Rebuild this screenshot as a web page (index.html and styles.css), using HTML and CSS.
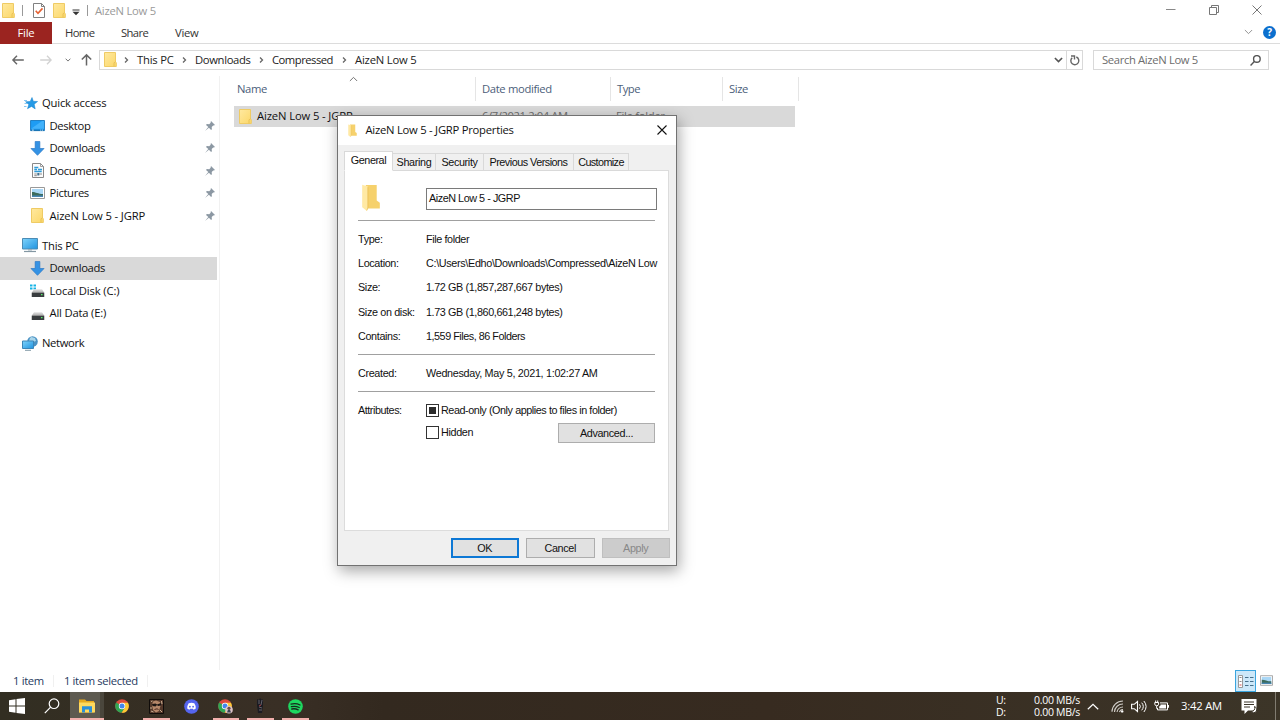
FILE: index.html
```html
<!DOCTYPE html>
<html lang="en">
<head>
<meta charset="utf-8">
<title>AizeN Low 5</title>
<link rel="stylesheet" href="styles.css">
</head>
<body>
<svg class="defs" width="0" height="0">
  <defs>
    <linearGradient id="gf" x1="0" y1="0" x2="1" y2="1"><stop offset="0" stop-color="#ffe9a0"/><stop offset="1" stop-color="#fbd768"/></linearGradient>
    <linearGradient id="gb" x1="0" y1="0" x2="1" y2="1"><stop offset="0" stop-color="#7fd3fb"/><stop offset="1" stop-color="#1f93df"/></linearGradient>
    <linearGradient id="gd" x1="0" y1="0" x2="0" y2="1"><stop offset="0" stop-color="#e2e2e2"/><stop offset="1" stop-color="#a5a5a5"/></linearGradient>
  </defs>
  <symbol id="folder" viewBox="0 0 13 15"><path d="M.5.500h11v9.500l.8.800v3.700H.5z" fill="url(#gf)" stroke="#efcb64"/><path d="M10 14.300v-3.500l1.500-1" fill="none" stroke="#e6bd50" stroke-width=".8"/></symbol>
  <symbol id="openfolder" viewBox="0 0 18 26"><path d="M4 1h10.500v15l3 2v5.500H4z" fill="#f6d16c"/><path d="M.5.8 6 2.500v20L5 26 .5 22.500z" fill="#ffe9a4"/><path d="M6 3v20l-1 2.500" fill="none" stroke="#e8bd50" stroke-width=".7"/></symbol>
  <symbol id="star" viewBox="0 0 14 13"><path d="m8 .5 1.300 3.800 4.300.2-3.400 2.700 1 4.700-3.700-2.500-4 2.300 1.300-4.200L1.500 4.700l4.700-.2z" fill="#259ae6" stroke="#1683cc" stroke-width=".5"/><path d="M0 3.500h3M.5 6.500h2.700M0 9.500h2.500" stroke="#67baf0" stroke-width=".8"/></symbol>
  <symbol id="desktop" viewBox="0 0 16 13"><path d="M.5.5h15v11H.5z" fill="#1d9cf4" stroke="#1676bd"/><path d="M1 9.500 13 1h2v8.500z" fill="#42b2fb"/><path d="M1 11h14" stroke="#146aa9"/><path d="M2 11h2M11 11h1M13 11h1" stroke="#d7efff"/></symbol>
  <symbol id="down" viewBox="0 0 15 16"><path d="M5 .5h5v7.500h4.500L7.500 15.300.5 8H5z" fill="#3492e4" stroke="#2676c4" stroke-width=".7"/></symbol>
  <symbol id="doc" viewBox="0 0 12 15"><path d="M.5.500h8l3 3v11h-11z" fill="#fcfcfc" stroke="#888"/><path d="M8.500.5v3h3" fill="none" stroke="#888" stroke-width=".8"/><path d="M2.300 4.500h4M6 6.500h4M2.300 6.500H5M2.300 8.500h7.400" stroke="#2f9bd8" stroke-width="1.400"/><path d="M2.300 11h2.500M7.300 11H10M2.300 12.700h2.500" stroke="#8a8a8a"/><path d="M5.300 10h2v2.500h-2z" fill="#466f8b"/></symbol>
  <symbol id="pic" viewBox="0 0 15 12"><path d="M.5.500h14v11H.5z" fill="#fff" stroke="#999"/><path d="M2 2h11v8H2z" fill="#a9d7f6"/><path d="M2 5c4 0 6 2 11 2v3H2z" fill="#3c6b5d"/><path d="M2 8.500h11V10H2z" fill="#4786b5"/></symbol>
  <symbol id="pc" viewBox="0 0 16 15"><path d="M.5.500h15v10.500H.5z" fill="url(#gb)" stroke="#4b8cb5"/><path d="M6 11h4v1.500H6z" fill="#9fb0ba"/><path d="M2 13.500h12" stroke="#8397a3" stroke-width="1.200"/></symbol>
  <symbol id="drive" viewBox="0 0 13 8"><path d="M2.500.3h8L13 4H0z" fill="url(#gd)"/><path d="M0 3.700h13V8H0z" fill="#393d3f"/><path d="M9.500 5.700H11" stroke="#55ee67" stroke-width="1.300"/></symbol>
  <symbol id="win" viewBox="0 0 16 16"><path d="M0 2.200 6.500 1.300V7.500H0zM7.500 1.100 16 0V7.500H7.500zM0 8.500h6.500v6.200L0 13.800zM7.500 8.500H16V16l-8.500-1.100z" fill="#fff"/></symbol>
  <symbol id="net" viewBox="0 0 16 15"><circle cx="10.500" cy="5.500" r="5.300" fill="#4a92c4"/><path d="M8 2c2-2 3 0 5 0l1 3-3 1-1 3-3-4z" fill="#a9d5ea"/><path d="M.5 5h11v7.500H.5z" fill="url(#gb)" stroke="#3c86b8"/><path d="M3 14.300h6" stroke="#829aa7"/></symbol>
  <symbol id="pin" viewBox="0 0 10 10"><path d="M6 0 10 4l-1.200.5-.6-.1-1.500 1.500.2 2.400-.8.6-2.200-2.200L0 10l3.300-3.900L1 3.900l.8-.8 2.400.2 1.500-1.500-.1-.6z" fill="#8c98a3"/></symbol>
  <symbol id="chev" viewBox="0 0 5 8"><path d="m1 1.500 2.500 2.500L1 6.500" fill="none" stroke="#666" stroke-width="1.300"/></symbol>
  <symbol id="chevd" viewBox="0 0 10 6"><path d="m1 .8 4 4 4-4" fill="none" stroke="currentColor" stroke-width="var(--w,1.500)"/></symbol>
  <symbol id="mag" viewBox="0 0 16 16"><circle cx="10" cy="5.700" r="4.800" fill="none" stroke="currentColor" stroke-width="var(--w,1.300)"/><path d="M6.600 9.200.8 15.200" stroke="currentColor" stroke-width="var(--w,1.300)"/></symbol>
  <symbol id="chrome" viewBox="0 0 14 14"><circle cx="7" cy="7" r="6.800" fill="#dd4b3e"/><path d="M7 7 1.100 3.600A6.800 6.800 0 0 0 6.700 13.800L10 8.700z" fill="#2fa653"/><path d="M7 3.800h6A6.800 6.800 0 0 1 6.700 13.800L10 8.600z" fill="#fcca35"/><circle cx="7" cy="7" r="3.200" fill="#fff"/><circle cx="7" cy="7" r="2.500" fill="#4287ee"/></symbol>
</svg>

<header class="titlebar">
  <svg class="tb-folder" width="13" height="15"><use href="#folder"/></svg>
  <i class="tb-sep tb-sep-a"></i>
  <svg class="tb-check" width="12" height="15" viewBox="0 0 12 15"><path d="M.5.500h8l3 3v11h-11z" fill="#fff" stroke="#818181"/><path d="M8.500.5v3h3" fill="none" stroke="#818181"/><path d="m2.700 7.800 2.300 2.600 4.500-5" fill="none" stroke="#e66233" stroke-width="1.600"/></svg>
  <svg class="tb-folder2" width="13" height="15"><use href="#folder"/></svg>
  <svg class="tb-drop" width="8" height="7" viewBox="0 0 8 7"><path d="M.5 1h7" stroke="#333"/><path d="M.5 2.800h7L4 6.300z" fill="#333"/></svg>
  <i class="tb-sep"></i>
  <span class="win-title">AizeN Low 5</span>
  <div class="win-ctl">
    <svg width="10" height="11" viewBox="0 0 10 11"><path d="M0 5.500h9.500" stroke="#888"/></svg>
    <svg width="10" height="10" viewBox="0 0 10 10"><path d="M.5 2.500h7v7h-7zM2.500 2.500v-2h7v7h-2" fill="none" stroke="#777"/></svg>
    <svg width="10" height="10" viewBox="0 0 10 10"><path d="m.5.500 9 9m0-9-9 9" stroke="#777"/></svg>
  </div>
</header>

<nav class="ribbon">
  <span class="tab-file">File</span><span class="rt rt-home">Home</span><span class="rt rt-share">Share</span><span class="rt rt-view">View</span>
  <div class="ribbon-end">
    <svg class="thin" width="9" height="6"><use href="#chevd"/></svg>
    <span class="help">?</span>
  </div>
</nav>

<section class="address">
  <svg class="a-back" width="12" height="10" viewBox="0 0 12 10"><path d="M5 .8.900 5 5 9.200M1 5h10.800" fill="none" stroke="#666" stroke-width="1.400"/></svg>
  <svg class="a-fwd" width="12" height="10" viewBox="0 0 12 10"><path d="M7 .8 11.100 5 7 9.200M11 5H.2" fill="none" stroke="#d2d2d2" stroke-width="1.300"/></svg>
  <svg class="a-rec" width="6" height="4"><use href="#chevd"/></svg>
  <svg class="a-up" width="11" height="12" viewBox="0 0 11 12"><path d="M.8 5.500 5.500.900l4.700 4.600M5.500 1v10.500" fill="none" stroke="#666" stroke-width="1.500"/></svg>
  <div class="crumbs">
    <svg width="13" height="15"><use href="#folder"/></svg>
    <svg class="c1" width="5" height="8"><use href="#chev"/></svg><span class="b1">This PC</span>
    <svg class="cx" width="5" height="8"><use href="#chev"/></svg><span class="b2">Downloads</span>
    <svg class="cx" width="5" height="8"><use href="#chev"/></svg><span class="b3">Compressed</span>
    <svg class="cx" width="5" height="8"><use href="#chev"/></svg><span class="b4">AizeN Low 5</span>
    <svg class="c-drop" width="9" height="6"><use href="#chevd"/></svg>
    <div class="refresh"><svg width="10" height="11" viewBox="0 0 10 11"><path d="M6.300 2A4 4 0 1 1 2.200 2.700M1 1h3.500v3.500" fill="none" stroke="#666" stroke-width="1.400"/></svg></div>
  </div>
  <div class="search"><span>Search AizeN Low 5</span><svg width="11" height="11"><use href="#mag"/></svg></div>
</section>

<main class="main">
  <aside class="side">
    <div class="row root"><svg class="ic-star" width="14" height="13"><use href="#star"/></svg><span>Quick access</span></div>
    <div class="row"><b class="ic"><svg width="15" height="12"><use href="#desktop"/></svg></b><span class="tight">Desktop</span><svg class="pin" width="10" height="10"><use href="#pin"/></svg></div>
    <div class="row"><b class="ic"><svg width="15" height="15"><use href="#down"/></svg></b><span class="tight">Downloads</span><svg class="pin" width="10" height="10"><use href="#pin"/></svg></div>
    <div class="row"><b class="ic"><svg width="12" height="15"><use href="#doc"/></svg></b><span class="tight">Documents</span><svg class="pin" width="10" height="10"><use href="#pin"/></svg></div>
    <div class="row"><b class="ic"><svg width="15" height="12"><use href="#pic"/></svg></b><span class="tight">Pictures</span><svg class="pin" width="10" height="10"><use href="#pin"/></svg></div>
    <div class="row"><b class="ic"><svg width="13" height="15"><use href="#folder"/></svg></b><span class="loose">AizeN Low 5 - JGRP</span><svg class="pin" width="10" height="10"><use href="#pin"/></svg></div>
    <div class="row root gap"><svg class="ic-pc" width="16" height="15"><use href="#pc"/></svg><span>This PC</span></div>
    <div class="row sel"><b class="ic"><svg width="15" height="15"><use href="#down"/></svg></b><span class="tight">Downloads</span></div>
    <div class="row"><b class="ic"><svg width="15" height="15" viewBox="0 0 15 15"><path d="M0 1.500h2.500v2H0zM3.500 1.500H6v2H3.500zM0 4.500h2.500v2H0zM3.500 4.500H6v2H3.500z" fill="#15b3e6"/><use href="#drive" x="1.500" y="6" width="13" height="8"/></svg></b><span class="loose">Local Disk (C:)</span></div>
    <div class="row"><b class="ic"><svg width="15" height="15" viewBox="0 0 15 15"><use href="#drive" x="1.500" y="6" width="13" height="8"/></svg></b><span>All Data (E:)</span></div>
    <div class="row root gap"><svg class="ic-pc" width="16" height="15"><use href="#net"/></svg><span class="tight">Network</span></div>
  </aside>
  <section class="files">
    <div class="thead">
      <span class="th th-name">Name<svg class="sort" width="9" height="6"><use href="#chevd"/></svg></span><span class="th th-date">Date modified</span><span class="th th-type">Type</span><span class="th th-size">Size</span>
    </div>
    <div class="file"><svg width="13" height="15"><use href="#folder"/></svg><span class="f-name loose">AizeN Low 5 - JGRP</span><span class="f-date">6/7/2021 2:04 AM</span><span class="f-type">File folder</span></div>
  </section>
</main>

<footer class="status">
  <span class="s1">1 item</span><span class="s2">1 item selected</span>
  <div class="views">
    <b class="v-on"><svg width="16" height="13" viewBox="0 0 16 13"><path d="M.5.500h4v12h-4z" fill="#fff" stroke="#999"/><path d="M1.500 2.500h2M1.500 6.500h2" stroke="#888"/><path d="M1.500 10h2" stroke="#d77" stroke-width="1.300"/><path d="M7 2.500h3.500M12 2.500h3.500M7 6.500h3.500M12 6.500h3.500M7 10.500h3.500M12 10.500h3.500" stroke="#47708b"/></svg></b>
    <svg class="v-pic" width="13" height="11"><use href="#pic"/></svg>
  </div>
</footer>

<footer class="taskbar">
  <b class="task"><svg width="16" height="16"><use href="#win"/></svg></b>
  <b class="task"><svg class="ts" width="16" height="16"><use href="#mag"/></svg></b>
  <b class="task active"><svg width="16" height="14" viewBox="0 0 16 14"><path d="M0 .5h6L7.500 2H15v11.500H0z" fill="#e8a91d"/><path d="M0 3.500h16v10H0z" fill="#ffd95e"/><path d="M3 13.500V7.300h10v6.200h-3V10.500H6v3z" fill="#2b8fd9"/></svg></b>
  <b class="task"><svg width="14" height="14"><use href="#chrome"/></svg></b>
  <b class="task run"><svg width="15" height="15" viewBox="0 0 15 15"><path d="M.5.500h14v14H.5z" fill="#54382a" stroke="#100c0a"/><path d="M4 2.500 7 1.500l4 1.500.5 4-1.500 5-3 1.500L4 11 3 6z" fill="#b58669"/><path d="M3 5l3.500-.5L8 5.500 12 4v2.500l-3 .5-1-1-1.500 1.500L3.500 7z" fill="#1d1514"/><path d="M5.500 10.500 8 9.800l1.500.7" fill="none" stroke="#4b2a22"/><path d="m2 12 2.500 1M11 11l2 2M2 2.500 3.500 2M12.500 2l.5 3M2 8v2" stroke="#cbb094"/></svg></b>
  <b class="task"><svg width="15" height="15" viewBox="0 0 15 15"><circle cx="7.500" cy="7.500" r="7.300" fill="#5565ee"/><path d="M4.700 4.300q2.800-1 5.600 0 1.700 2.500 1.500 5.300-1.300 1-2.300 1.100l-.6-.9H6.100l-.6.900q-1-.1-2.300-1.100Q3 6.800 4.700 4.300z" fill="#fff"/><circle cx="5.900" cy="7.700" r=".9" fill="#5565ee"/><circle cx="9.100" cy="7.700" r=".9" fill="#5565ee"/></svg></b>
  <b class="task run"><svg width="15" height="15" viewBox="0 0 15 15"><use href="#chrome" width="14" height="14"/><circle cx="11" cy="10.700" r="3.800" fill="#dcc4c8"/><path d="M9 13.500q.5-3 2-3t2 3z" fill="#384253"/><circle cx="11" cy="9.300" r="1.600" fill="#674c4a"/></svg></b>
  <b class="task run"><svg width="9" height="16" viewBox="0 0 9 16"><path d="m1 1 2 1 1-2 2 2 1-1v6l-1 8H2L1 7z" fill="#1b1b22"/><path d="M3 2v4M6 2l-1 5M3 9l3 1M3 12h3" stroke="#64626b"/><path d="m3 8 2-1" stroke="#a83f42"/></svg></b>
  <b class="task run"><svg width="15" height="15" viewBox="0 0 15 15"><circle cx="7.500" cy="7.500" r="7.300" fill="#1ed760"/><path d="M3 5.200q4.800-1.300 9 .8M3.400 7.700q4.200-1 7.800.8M3.800 10q3.300-.8 6.400.8" fill="none" stroke="#17291d" stroke-width="1.300" stroke-linecap="round"/></svg></b>
  <div class="tray">
    <div class="net-l"><span>U:</span><span>D:</span></div>
    <div class="net-v"><span>0.00 MB/s</span><span>0.00 MB/s</span></div>
    <svg class="t-up" width="12" height="7" viewBox="0 0 12 7"><path d="m.8 6.300 5.200-5 5.200 5" fill="none" stroke="#fff" stroke-width="1.200"/></svg>
    <svg class="t-wifi" width="13" height="13" viewBox="0 0 13 13"><path d="M1 11.800A11 11 0 0 1 12 1M3.500 12A8.300 8.300 0 0 1 12 4M6 12a6 6 0 0 1 6-5M8.500 12A3.500 3.500 0 0 1 12 9.500" fill="none" stroke="#d2cfca" stroke-width="1.100"/><circle cx="11.200" cy="11.400" r="1.200" fill="#fff"/></svg>
    <svg class="t-vol" width="16" height="13" viewBox="0 0 16 13"><path d="M.6 4.300h2.600L6.500 1.500v10L3.200 8.700H.6z" fill="none" stroke="#fff" stroke-width="1.100"/><path d="M8.500 4.300q1.800 2.200 0 4.400M10.700 2.700q3.200 3.800 0 7.600M12.900 1q4.400 5.500 0 11" fill="none" stroke="#fff"/></svg>
    <svg class="t-bat" width="15" height="12" viewBox="0 0 15 12"><path d="M6 2.900h7.500v7H3.500V8" fill="none" stroke="#fff"/><path d="M6.500 4.400h5.500v4H5.200V6.500l1.300-1zM14 5h1v2.800h-1z" fill="#fff"/><path d="M.8 2.500h3.800v1.700q0 1.500-1.900 1.500T.8 4.200zM1.700.5v2M3.700.5v2M2.700 6v2.500h1" fill="none" stroke="#fff"/></svg>
    <span class="clock">3:42 AM</span>
    <svg class="t-note" width="16" height="16" viewBox="0 0 16 16"><path d="M.5 1h15v11.500H7L3.500 16v-3.500h-3z" fill="#fff"/><path d="M3 4h10M3 6.500h10M3 9h6" stroke="#3b352a"/><path d="M10 13.500a3.200 3.200 0 1 0 3.500-5 3.500 3.500 0 0 1-3.500 5z" fill="#fff" stroke="#3b352a"/></svg>
    <i class="peek"></i>
  </div>
</footer>

<div class="dialog">
  <div class="d-title"><svg width="9" height="13"><use href="#openfolder"/></svg><span class="d-name">AizeN Low 5 - JGRP Properties</span><svg class="d-close" width="10" height="10" viewBox="0 0 10 10"><path d="m.5.500 9 9m0-9-9 9" stroke="#111" stroke-width="1.100"/></svg></div>
  <div class="d-tabs"><span class="dt on dt1">General</span><span class="dt dt2">Sharing</span><span class="dt dt3">Security</span><span class="dt dt4">Previous Versions</span><span class="dt dt5">Customize</span></div>
  <div class="panel">
    <div class="p-head"><svg width="20" height="27"><use href="#openfolder"/></svg><div class="p-input">AizeN Low 5 - JGRP</div></div>
    <div class="grp g1">
      <div class="kv"><span>Type:</span><span class="k-sz">File folder</span></div>
      <div class="kv"><span>Location:</span><span class="k-loc">C:\Users\Edho\Downloads\Compressed\AizeN Low</span></div>
      <div class="kv"><span>Size:</span><span class="k-sz">1.72 GB (1,857,287,667 bytes)</span></div>
      <div class="kv"><span>Size on disk:</span><span class="k-sz">1.73 GB (1,860,661,248 bytes)</span></div>
      <div class="kv"><span>Contains:</span><span class="k-ct">1,559 Files, 86 Folders</span></div>
    </div>
    <div class="grp g2"><div class="kv"><span>Created:</span><span class="k-cr">Wednesday, May 5, 2021, 1:02:27 AM</span></div></div>
    <div class="grp g3">
      <span class="g3-l">Attributes:</span>
      <div class="g3-r">
        <div class="ck"><i class="box full"></i><span class="k-ro">Read-only (Only applies to files in folder)</span></div>
        <div class="ck ck2"><i class="box"></i><span>Hidden</span><span class="btn adv">Advanced...</span></div>
      </div>
    </div>
  </div>
  <div class="d-foot"><span class="btn ok">OK</span><span class="btn">Cancel</span><span class="btn off">Apply</span></div>
</div>
</body>
</html>
```
FILE: styles.css
```css
* { box-sizing: border-box; }
body { margin: 0; width: 1280px; height: 720px; overflow: hidden; display: flex; flex-direction: column; background: #fff; color: #111; font: 11.25px/15px "Open Sans", "Noto Sans", sans-serif; letter-spacing: -.2px; }
svg { display: block; flex: none; overflow: visible; }
span { white-space: nowrap; }
i, b { display: block; flex: none; font-style: normal; font-weight: 400; }
.defs { position: absolute; }
.tight { letter-spacing: -.35px; }
.loose { letter-spacing: -.13px; }

.titlebar { height: 22px; flex: none; display: flex; align-items: center; padding-left: 2px; }
.titlebar svg { margin-bottom: 1px; }
.tb-sep { width: 1px; height: 11px; background: #999; margin-bottom: 2px; }
.tb-sep-a { margin-left: 7px; }
.tb-check { margin-left: 10px; }
.tb-folder2 { margin-left: 8px; }
.tb-drop { margin: 3px 7px 0 6px; }
.win-title { margin-left: 7px; color: #9a9a9a; letter-spacing: -.25px; padding-bottom: 1px; }
.win-ctl { margin-left: auto; display: flex; gap: 33px; align-items: center; padding-right: 18px; padding-bottom: 2px; }

.ribbon { height: 22px; flex: none; display: flex; align-items: center; border-bottom: 1px solid #dcdcdc; color: #333; }
.tab-file { width: 52px; height: 22px; line-height: 21px; text-align: center; background: #9b2420; color: #fff; }
.rt { padding-bottom: 1px; }
.rt-home { width: 56px; padding-left: 13px; letter-spacing: -.6px; }
.rt-share { width: 54px; padding-left: 13px; letter-spacing: -.6px; }
.rt-view { padding-left: 13px; letter-spacing: -.3px; }
.ribbon-end { margin-left: auto; display: flex; align-items: center; gap: 10px; padding-right: 4px; padding-bottom: 1px; color: #888; }
.thin { --w: 1; }
.help { width: 13px; height: 13px; border-radius: 50%; background: #0b6fce; color: #fff; font-weight: 700; font-size: 10px; line-height: 13px; text-align: center; }

.address { height: 32px; flex: none; display: flex; align-items: center; padding-left: 12px; color: #666; }
.a-fwd { margin-left: 16px; }
.a-rec { margin-left: 13px; }
.a-up { margin-left: 10px; }
.crumbs { margin-left: 7px; width: 984px; height: 20px; border: 1px solid #d9d9d9; display: flex; align-items: center; padding-left: 4px; color: #222; }
.crumbs > svg:first-child { margin-bottom: 1px; }
.c1 { margin-left: 7px; }
.cx { margin-left: 8px; }
.crumbs span { margin-left: 8px; padding-bottom: 2px; }
.b1 { width: 37px; } .b2 { width: 56px; } .b3 { width: 62px; letter-spacing: -.5px; }
.b2 { letter-spacing: -.35px; }
.c-drop { margin-left: auto; margin-right: 3px; color: #555; --w: 1.8; }
.refresh { border-left: 1px solid #d9d9d9; width: 16px; height: 18px; display: flex; align-items: center; justify-content: center; }
.search { margin-left: 10px; width: 176px; height: 20px; border: 1px solid #d9d9d9; display: flex; align-items: center; justify-content: space-between; padding: 0 7px 0 8px; color: #6d6d6d; letter-spacing: -.35px; }
.search span { padding-bottom: 2px; }
.search svg { color: #555; --w: 2; }

.main { flex: 1; display: flex; min-height: 0; }
.side { width: 220px; flex: none; border-right: 1px solid #f1f1f1; padding-top: 16px; }
.row { height: 22.5px; width: 217px; display: flex; align-items: center; padding-left: 30px; }
.row span { padding-bottom: 1.500px; }
.row.root { padding-left: 22px; }
.row.gap { margin-top: 7.500px; }
.row.sel { background: #d9d9d9; }
.ic { width: 15px; display: flex; justify-content: center; margin-right: 4.500px; }
.ic-star { margin: 0 4px 0 2px; }
.ic-pc { margin-right: 4px; }
.pin { margin-left: auto; margin-right: 2.500px; }

.files { flex: 1; }
.thead { display: flex; height: 24px; margin-top: 1px; color: #4c607a; }
.th { border-right: 1px solid #e5e5e5; line-height: 24px; padding-left: 6px; }
.th-name { width: 256px; padding-left: 17px; position: relative; letter-spacing: -.4px; }
.sort { position: absolute; left: 129px; top: -1px; transform: rotate(180deg); --w: 1; color: #666; }
.th-date { width: 135px; letter-spacing: -.35px; } .th-type { width: 112px; letter-spacing: -.5px; } .th-size { width: 76px; letter-spacing: -.4px; }
.file { margin: 5px 0 0 14px; width: 561px; height: 21px; background: #d9d9d9; display: flex; align-items: center; padding-left: 5px; }
.file > svg { margin-bottom: 1px; }
.file span { padding-bottom: 2px; }
.f-name { width: 225px; padding-left: 5px; margin-right: 5px; }
.f-date { width: 134px; color: #6d6d6d; letter-spacing: -.4px; }
.f-type { color: #6d6d6d; letter-spacing: -.3px; }

.status { height: 22px; flex: none; display: flex; align-items: center; color: #26395e; }
.s1 { width: 54px; padding-left: 13px; border-right: 1px solid #f0f0f0; line-height: 12px; letter-spacing: -.35px; }
.s2 { width: 94px; padding-left: 10px; border-right: 1px solid #f0f0f0; line-height: 12px; letter-spacing: -.37px; }
.views { margin-left: auto; display: flex; align-items: center; padding-right: 7px; align-self: stretch; }
.v-on { width: 21px; height: 22px; display: flex; align-items: center; justify-content: center; background: #cce8f9; border: 1px solid #3aa5df; margin-right: 4px; }
.v-pic { margin-bottom: 2px; }

.taskbar { height: 28px; flex: none; background: linear-gradient(90deg, #322e22, #392f25 22%, #33291f 30%, #372b20 60%, #3c3528); display: flex; color: #fff; }
.task { width: 34.750px; height: 28px; display: flex; align-items: center; justify-content: center; position: relative; }
.ts { --w: 1.2; }
.active { background: linear-gradient(90deg, #5d5a50 88%, #4a463c 88%); }
.active::after, .run::after { content: ""; position: absolute; left: 4px; right: 4px; bottom: 0; height: 2px; background: #f2b0ad; }
.active::after { left: 0; right: 0; }
.tray { margin-left: auto; display: flex; align-items: center; height: 28px; }
.net-l, .net-v { display: flex; flex-direction: column; line-height: 12px; font-size: 10.500px; padding-bottom: 1px; letter-spacing: -.3px; }
.net-l { width: 36px; }
.net-v { width: 48px; margin-right: 7px; align-items: flex-end; }
.t-wifi { margin-left: 12px; } .t-vol { margin-left: 7px; } .t-bat { margin-left: 7px; }
.clock { margin-left: 12px; width: 41px; padding-bottom: 2px; }
.t-note { margin-left: 19px; }
.peek { width: 1px; height: 28px; background: #817c71; margin: 0 4px 0 18px; }

.dialog { position: absolute; left: 337px; top: 115px; width: 340px; height: 451px; border: 1px solid #727272; background: #f0f0f0; box-shadow: 2px 5px 14px rgba(0,0,0,.35); display: flex; flex-direction: column; font: 10.800px/14px "Liberation Sans", Arial, sans-serif; letter-spacing: -.35px; color: #111; }
.d-title { height: 29px; flex: none; background: #fff; display: flex; align-items: center; padding: 0 9px 0 10px; font: 11.250px/15px "Open Sans", sans-serif; letter-spacing: -.25px; }
.d-name { margin-left: 8.500px; padding-bottom: 2px; }
.d-close { margin-left: auto; margin-bottom: 2px; }
.d-tabs { height: 26px; flex: none; padding-left: 6px; display: flex; align-items: flex-end; position: relative; z-index: 1; margin-bottom: -1px; }
.dt { height: 18px; line-height: 17px; border: 1px solid #d9d9d9; border-left: 0; text-align: center; }
.dt.on { height: 20px; line-height: 17px; background: #fff; border-left: 1px solid #d9d9d9; border-bottom-color: #fff; letter-spacing: -.45px; }
.dt1 { width: 49px; } .dt2 { width: 43px; } .dt3 { width: 48px; } .dt4 { width: 90px; letter-spacing: -.5px; } .dt5 { width: 55px; letter-spacing: -.6px; }
.panel { margin: 0 7px 0 6px; height: 361px; flex: none; background: #fff; border: 1px solid #dcdcdc; padding: 0 13px; }
.p-head { height: 49px; display: flex; padding-left: 3px; align-items: flex-start; }
.p-head svg { margin-top: 13px; }
.p-input { margin: 17px -2px 0 45px; flex: 1; height: 22px; border: 1px solid #7a7a7a; line-height: 18px; padding-left: 2px; letter-spacing: -.45px; }
.grp { border-top: 1px solid #a0a0a0; }
.g1 { height: 134px; padding-top: 6px; }
.kv { height: 24.400px; display: flex; align-items: center; }
.kv span { padding-bottom: 1px; }
.kv > :first-child { width: 68px; flex: none; }
.k-loc { letter-spacing: -.33px; }
.k-sz { letter-spacing: -.39px; }
.k-ct { letter-spacing: -.47px; }
.k-cr { letter-spacing: -.31px; }
.k-ro { letter-spacing: -.43px; padding-bottom: 2px; }
.g2 { height: 37px; padding-top: 6px; }
.g3 { display: flex; padding-top: 11px; }
.g3-l { width: 68px; letter-spacing: -.45px; }
.ck { display: flex; align-items: center; height: 15px; }
.ck .box { margin-bottom: 1px; }
.ck2 { height: 20px; margin-top: 5px; width: 229px; }
.ck2 .box, .ck2 .box + span { margin-bottom: 2px; }
.box { width: 13px; height: 13px; border: 1px solid #333; margin-right: 2px; background: #fff; }
.box.full { background: #2b2b2b; box-shadow: inset 0 0 0 2px #fff; }
.btn { width: 69px; height: 20px; border: 1px solid #adadad; background: #e1e1e1; line-height: 19px; text-align: center; }
.adv { width: 97px; margin-left: auto; }
.d-foot { display: flex; justify-content: flex-end; gap: 7px; padding: 7px 6px 0 0; }
.d-foot .btn { width: 68.500px; }
.ok { border: 2px solid #0d78d5; line-height: 17px; }
.off { background: #ccc; border-color: #bfbfbf; color: #888; }
```
